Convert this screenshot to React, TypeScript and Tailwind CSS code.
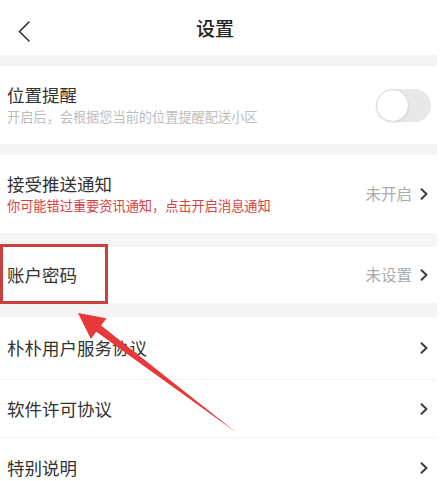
import React from "react";

const font = { fontFamily: '"Noto Sans CJK SC", "Noto Sans", sans-serif' };

function Chevron() {
  return (
    <svg width="8" height="12" viewBox="0 0 8 12" className="shrink-0">
      <polyline points="1.5,1.2 6.5,6 1.5,10.8" fill="none" stroke="#3a3a3a" strokeWidth="1.9" strokeLinecap="round" strokeLinejoin="round" />
    </svg>
  );
}

function Band({ h }: { h: string }) {
  return <div className={`bg-[#f4f4f4] ${h}`} />;
}

export default function App() {
  return (
    <div className="relative w-[448px] h-[481px] overflow-hidden bg-white" style={font}>
      <div className="w-[437px] flex flex-col">
        {/* Header */}
        <div className="relative h-[55px] flex items-center justify-center pr-[7px]">
          <svg className="absolute left-[18px] top-[21px]" width="12" height="21" viewBox="0 0 12 21">
            <polyline points="11,1 1.5,10.5 11,20" fill="none" stroke="#333" strokeWidth="1.6" strokeLinecap="round" strokeLinejoin="round" />
          </svg>
          <span className="text-[19px] font-medium text-[#222] leading-none">设置</span>
        </div>
        <div className="bg-[#f4f4f4] h-[11px]" />

        {/* 位置提醒 */}
        <div className="h-[78px] flex items-center justify-between pl-[7px] pr-[6px]">
          <div className="flex flex-col">
            <span className="text-[17.5px] leading-[24px] text-[#333]">位置提醒</span>
            <span className="text-[13.2px] leading-[20px] text-[#bcbcbc]">开启后，会根据您当前的位置提醒配送小区</span>
          </div>
          <div className="w-[55px] h-[33px] rounded-full bg-[#e8e8e8] flex items-center">
            <div className="w-[33px] h-[33px] rounded-full bg-white border border-[#dcdcdc] shadow-[0_1px_2px_rgba(0,0,0,0.08)]" />
          </div>
        </div>
        <div className="bg-[#f4f4f4] h-[11px]" />

        {/* 接受推送通知 */}
        <div className="h-[78px] flex items-center justify-between pl-[7px] pr-[9px]">
          <div className="flex flex-col">
            <span className="text-[17.5px] leading-[24px] text-[#333]">接受推送通知</span>
            <span className="text-[13.2px] leading-[20px] text-[#d8413f]">你可能错过重要资讯通知，点击开启消息通知</span>
          </div>
          <div className="flex items-center gap-[8px]">
            <span className="text-[15.5px] text-[#ababab]">未开启</span>
            <Chevron />
          </div>
        </div>
        <div className="bg-[#f4f4f4] h-[14px]" />

        {/* 账户密码 */}
        <div className="h-[56px] flex items-center justify-between pl-[7px] pr-[9px]">
          <span className="text-[17.5px] leading-[24px] text-[#333]">账户密码</span>
          <div className="flex items-center gap-[8px]">
            <span className="text-[15.5px] text-[#ababab]">未设置</span>
            <Chevron />
          </div>
        </div>
        <div className="bg-[#f4f4f4] h-[14px]" />

        <div className="h-[63px] flex items-center justify-between pl-[7px] pr-[9px] border-b border-[#f3f3f3]">
          <span className="text-[17.5px] leading-[24px] text-[#333]">朴朴用户服务协议</span>
          <Chevron />
        </div>
        <div className="h-[58px] flex items-center justify-between pl-[7px] pr-[9px] border-b border-[#f3f3f3]">
          <span className="text-[17.5px] leading-[24px] text-[#333]">软件许可协议</span>
          <Chevron />
        </div>
        <div className="h-[60px] flex items-center justify-between pl-[7px] pr-[9px]">
          <span className="text-[17.5px] leading-[24px] text-[#333]">特别说明</span>
          <Chevron />
        </div>
      </div>

      {/* Annotation box */}
      <div className="absolute left-0 top-[244px] w-[108px] h-[60px] border-[3px] border-[#c8413f]" />

      {/* Annotation arrow */}
      <svg className="absolute left-0 top-0 pointer-events-none" width="448" height="481" viewBox="0 0 448 481">
        <polygon
          points="78,313 106.5,318.2 101.1,325.4 237,433 96.3,331.8 90.9,339"
          fill="#e8383a"
        />
      </svg>
    </div>
  );
}
